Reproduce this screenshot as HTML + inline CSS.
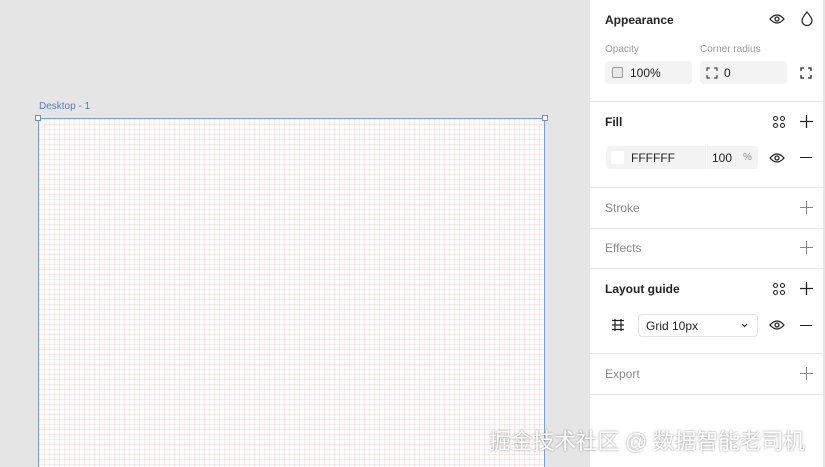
<!DOCTYPE html>
<html><head><style>
*{margin:0;padding:0;box-sizing:border-box}
html,body{width:825px;height:467px;overflow:hidden}
body{background:#e5e5e5;font-family:"Liberation Sans",sans-serif;position:relative}
.frame{position:absolute;left:38px;top:118px;width:507px;height:349px;background-color:#fff;border:1px solid #7a9fd0;border-bottom:none;
background-image:linear-gradient(to right,rgba(240,160,160,.22) 1px,transparent 1px),linear-gradient(to bottom,rgba(240,160,160,.22) 1px,transparent 1px);background-size:5px 5px}
.h{position:absolute;width:6px;height:6px;background:#fff;border:1px solid #6a90c8}
.lbl{position:absolute;left:39px;top:101px;font-size:10px;color:#4f7fc0}
.panel{position:absolute;left:590px;top:0;width:233px;height:467px;background:#fff}
.div{position:absolute;left:0;width:233px;height:1px;background:#e6e6e6}
.t{position:absolute;font-size:12px;color:#222}
.b{font-weight:bold}
.g{color:#888}
.s{color:#999;font-size:10px}
.f{position:absolute;background:#f3f3f3;border-radius:4px;height:23px}
svg{position:absolute}
.wm{position:absolute;left:489px;top:424px;font-size:22px;color:#fff;font-family:"Liberation Sans","Noto Sans CJK SC",sans-serif;text-shadow:0 0 2px #888;letter-spacing:-0.3px}
</style></head><body>
<div class="lbl">Desktop - 1</div>
<div class="frame"></div>
<div class="h" style="left:35px;top:115px"></div>
<div class="h" style="left:542px;top:115px"></div>
<div class="panel">
<div class="t b" style="left:15px;top:13px">Appearance</div>
<svg style="left:179px;top:12px" width="16" height="14" viewBox="0 0 16 14"><path d="M1 7Q8 -1 15 7Q8 15 1 7Z" fill="none" stroke="#222" stroke-width="1.3"/><circle cx="8" cy="7" r="2" fill="none" stroke="#222" stroke-width="1.3"/></svg>
<svg style="left:211px;top:11px" width="12" height="15" viewBox="0 0 12 15"><path d="M6 1Q1 7 1 9.5A5 5 0 0 0 11 9.5Q11 7 6 1Z" fill="none" stroke="#222" stroke-width="1.2"/></svg>
<div class="t s" style="left:15px;top:44px">Opacity</div>
<div class="t s" style="left:110px;top:44px">Corner radius</div>
<div class="f" style="left:15px;top:61px;width:87px"></div>
<div style="position:absolute;left:22px;top:67px;width:11px;height:11px;border:1px solid #999;border-radius:2px;background:#e8e8e8"></div>
<div class="t" style="left:40px;top:66px">100%</div>
<div class="f" style="left:110px;top:61px;width:87px"></div>
<svg style="left:116px;top:67px" width="12" height="12" viewBox="0 0 12 12"><path d="M1 4V1H4M8 1H11V4M11 8V11H8M4 11H1V8" fill="none" stroke="#444" stroke-width="1.2"/></svg>
<div class="t" style="left:134px;top:66px">0</div>
<svg style="left:210px;top:67px" width="12" height="12" viewBox="0 0 12 12"><path d="M1 4V1H4M8 1H11V4M11 8V11H8M4 11H1V8" fill="none" stroke="#222" stroke-width="1.3"/></svg>
<div class="div" style="top:101px"></div>
<div class="t b" style="left:15px;top:115px">Fill</div>
<svg style="left:182px;top:115px" width="14" height="14" viewBox="0 0 14 14" fill="none" stroke="#222" stroke-width="1.1"><circle cx="3.5" cy="3.5" r="2"/><circle cx="10.5" cy="3.5" r="2"/><circle cx="3.5" cy="10.5" r="2"/><circle cx="10.5" cy="10.5" r="2"/></svg>
<svg style="left:210px;top:115px" width="13" height="13" viewBox="0 0 13 13"><path d="M6.5 0V13M0 6.5H13" stroke="#222" stroke-width="1.3"/></svg>
<div class="f" style="left:16px;top:146px;width:152px"></div>
<div style="position:absolute;left:116px;top:146px;width:1px;height:23px;background:#fff"></div>
<div style="position:absolute;left:21px;top:151px;width:13px;height:13px;background:#fff;border-radius:2px"></div>
<div class="t" style="left:41px;top:151px">FFFFFF</div>
<div class="t" style="left:122px;top:151px">100</div>
<div class="t g" style="left:153px;top:152px;font-size:10px">%</div>
<svg style="left:179px;top:151px" width="16" height="14" viewBox="0 0 16 14"><path d="M1 7Q8 -1 15 7Q8 15 1 7Z" fill="none" stroke="#222" stroke-width="1.3"/><circle cx="8" cy="7" r="2" fill="none" stroke="#222" stroke-width="1.3"/></svg>
<div style="position:absolute;left:210px;top:157px;width:12px;height:1.3px;background:#222"></div>
<div class="div" style="top:187px"></div>
<div class="t g" style="left:15px;top:201px">Stroke</div>
<svg style="left:210px;top:201px" width="13" height="13" viewBox="0 0 13 13"><path d="M6.5 0V13M0 6.5H13" stroke="#888" stroke-width="1.1"/></svg>
<div class="div" style="top:228px"></div>
<div class="t g" style="left:15px;top:241px">Effects</div>
<svg style="left:210px;top:241px" width="13" height="13" viewBox="0 0 13 13"><path d="M6.5 0V13M0 6.5H13" stroke="#888" stroke-width="1.1"/></svg>
<div class="div" style="top:268px"></div>
<div class="t b" style="left:15px;top:282px">Layout guide</div>
<svg style="left:182px;top:282px" width="14" height="14" viewBox="0 0 14 14" fill="none" stroke="#222" stroke-width="1.1"><circle cx="3.5" cy="3.5" r="2"/><circle cx="10.5" cy="3.5" r="2"/><circle cx="3.5" cy="10.5" r="2"/><circle cx="10.5" cy="10.5" r="2"/></svg>
<svg style="left:210px;top:282px" width="13" height="13" viewBox="0 0 13 13"><path d="M6.5 0V13M0 6.5H13" stroke="#222" stroke-width="1.3"/></svg>
<svg style="left:22px;top:319px" width="12" height="12" viewBox="0 0 12 12"><path d="M0 1.5H12M0 6H12M0 10.5H12M3 0V12M9 0V12" stroke="#222" stroke-width="1.2" fill="none"/></svg>
<div style="position:absolute;left:48px;top:314px;width:120px;height:23px;border:1px solid #e3e3e3;border-radius:4px"></div>
<div class="t" style="left:56px;top:319px">Grid 10px</div>
<svg style="left:151px;top:323px" width="7" height="5" viewBox="0 0 7 5"><path d="M1 1L3.5 3.5L6 1" stroke="#222" stroke-width="1.2" fill="none"/></svg>
<svg style="left:179px;top:318px" width="16" height="14" viewBox="0 0 16 14"><path d="M1 7Q8 -1 15 7Q8 15 1 7Z" fill="none" stroke="#222" stroke-width="1.3"/><circle cx="8" cy="7" r="2" fill="none" stroke="#222" stroke-width="1.3"/></svg>
<div style="position:absolute;left:210px;top:325px;width:12px;height:1.3px;background:#222"></div>
<div class="div" style="top:353px"></div>
<div class="t g" style="left:15px;top:367px">Export</div>
<svg style="left:210px;top:367px" width="13" height="13" viewBox="0 0 13 13"><path d="M6.5 0V13M0 6.5H13" stroke="#888" stroke-width="1.1"/></svg>
<div class="div" style="top:394px"></div>
</div>
<div class="wm">掘金技术社区 @ 数据智能老司机</div>
</body></html>
